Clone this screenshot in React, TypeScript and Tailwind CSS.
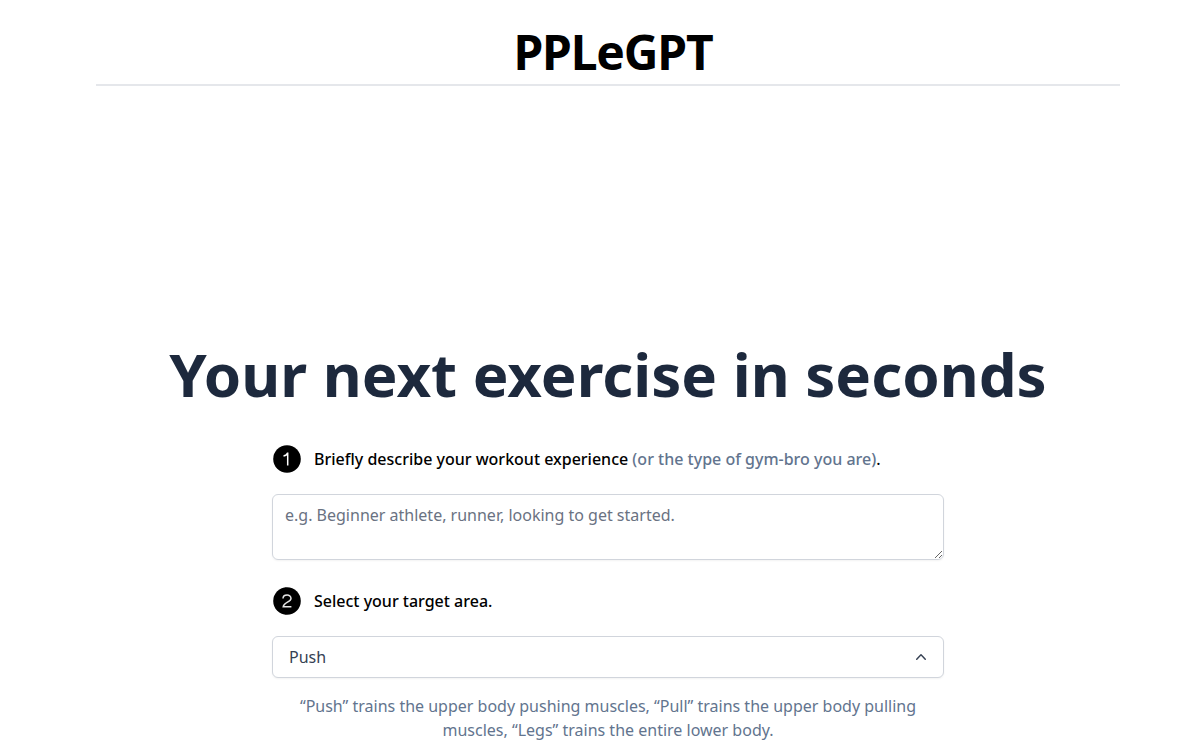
import React, { useState } from 'react';

const areas = ['Push', 'Pull', 'Legs'];

const Header: React.FC = () => (
  <header className="flex w-full items-center justify-center border-b-2 border-gray-200 pt-7 pb-2 pl-2.5">
    <a href="/">
      <h1 className="text-5xl font-bold tracking-tight text-black">PPLeGPT</h1>
    </a>
  </header>
);

const StepBadge: React.FC<{ step: number }> = ({ step }) => (
  <svg width="30" height="30" viewBox="0 0 30 30" fill="none" aria-hidden="true">
    <circle cx="15" cy="15" r="13.8" fill="#000" />
    {step === 1 ? (
      <path d="M11.5 12 C14 11.6 15.3 10.6 15.7 8.6 V21.6" stroke="#fff" strokeWidth="1.5" />
    ) : (
      <path
        d="M11 12.6 C11 7.8 19 7.8 19 12.4 C19 16 11.8 16.4 11.2 20.8 H19.4"
        stroke="#e5e5e5"
        strokeWidth="1.5"
      />
    )}
  </svg>
);

export default function App() {
  const [bio, setBio] = useState('');
  const [area, setArea] = useState('Push');

  return (
    <div className="pl-4">
      <div className="mx-auto flex max-w-5xl flex-col items-center font-['Noto_Sans',sans-serif] text-black">
        <Header />
        <main className="mt-[258px] flex w-full flex-col items-center text-center">
          <h2 className="text-6xl font-bold text-slate-800">Your next exercise in seconds</h2>
          <div className="w-full max-w-2xl">
            <label htmlFor="bio" className="mt-10 flex items-center gap-3 text-left font-medium">
              <StepBadge step={1} />
              <span>
                Briefly describe your workout experience{' '}
                <span className="text-slate-500">(or the type of gym-bro you are)</span>.
              </span>
            </label>
            <textarea
              id="bio"
              rows={2}
              value={bio}
              onChange={(e) => setBio(e.target.value)}
              placeholder="e.g. Beginner athlete, runner, looking to get started."
              className="mt-5 mb-[26px] block w-full rounded-md border border-gray-300 px-3 py-2 shadow-xs placeholder:text-gray-500"
            />
            <label htmlFor="area" className="mb-5 flex items-center gap-3 text-left font-medium">
              <StepBadge step={2} />
              <span>Select your target area.</span>
            </label>
            <div className="grid items-center">
              <select
                id="area"
                value={area}
                onChange={(e) => setArea(e.target.value)}
                className="col-start-1 row-start-1 w-full appearance-none rounded-md border border-gray-300 bg-white px-4 py-2 text-gray-700 shadow-xs"
              >
                {areas.map((name) => (
                  <option key={name}>{name}</option>
                ))}
              </select>
              <svg
                className="pointer-events-none col-start-1 row-start-1 mr-[13px] h-5 w-5 justify-self-end text-gray-700"
                viewBox="0 0 20 20"
                fill="currentColor"
                aria-hidden="true"
              >
                <path
                  fillRule="evenodd"
                  d="M14.77 12.79a.75.75 0 01-1.06-.02L10 8.832 6.29 12.77a.75.75 0 11-1.08-1.04l4.25-4.5a.75.75 0 011.08 0l4.25 4.5a.75.75 0 01-.02 1.06z"
                  clipRule="evenodd"
                />
              </svg>
            </div>
            <p className="px-4 py-4 text-slate-500">
              “Push” trains the upper body pushing muscles, “Pull” trains the upper body pulling muscles, “Legs” trains
              the entire lower body.
            </p>
          </div>
        </main>
      </div>
    </div>
  );
}
